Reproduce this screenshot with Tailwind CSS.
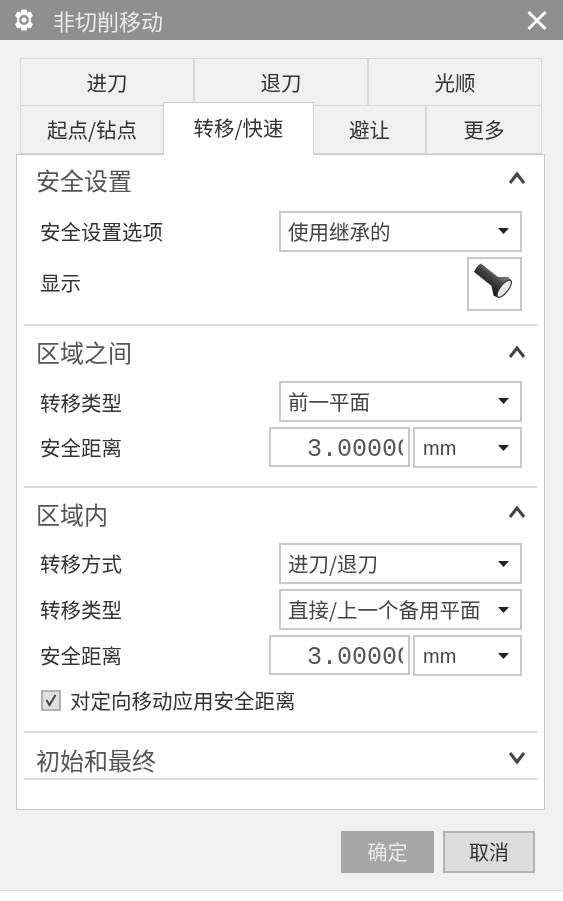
<!DOCTYPE html>
<html lang="zh-CN">

<head>
    <meta charset="UTF-8">
    <meta name="viewport" content="width=device-width, initial-scale=1.0">
    <title>非切削移动</title>
    <script src="https://cdn.jsdelivr.net/npm/@tailwindcss/browser@4"></script>
</head>

<body class="bg-white text-[#333] font-['Noto_Sans_CJK_SC','Noto_Sans',sans-serif]">
    <div class="w-[563px] h-[901px] overflow-hidden blur-[0.6px]">
        <div class="h-[891px] bg-[#f0f0f0] border-b border-[#ddd] flex flex-col">

            <!-- Title bar -->
            <div class="h-10 shrink-0 bg-[#8f8f8f] flex items-center pl-[12px] pr-[15px] text-white">
                <svg class="w-[24px] h-[24px]" viewBox="0 0 24 24">
                    <path fill="#fff" fill-rule="evenodd" d="M9.500 1.500h5l1 3 3-1 2.500 4.300-2.200 2.200v4l2.200 2.200-2.500 4.300-3-1-1 3h-5l-1-3-3 1-2.500-4.300 2.200-2.200v-4l-2.200-2.200 2.500-4.300 3 1zM12 7a5 5 0 1 0 0 10 5 5 0 0 0 0-10z" />
                    <circle cx="12" cy="12" r="2.500" fill="#fff" />
                </svg>
                <span class="ml-[17px] text-[22px] leading-none text-[#e8e8e8]">非切削移动</span>
                <svg class="ml-auto w-[22px] h-[22px]" viewBox="0 0 22 22">
                    <path d="M2.500 3l17 17M19.500 3l-17 17" stroke="#fff" stroke-width="3" fill="none" />
                </svg>
            </div>

            <!-- Tabs -->
            <div class="mt-[18px] ml-[20px] w-[522px] text-[20.500px] text-[#333]">
                <div class="flex h-12 border border-[#d8d8d8]">
                    <div class="w-[174px] flex items-center justify-center border-r-2 border-[#d8d8d8]">进刀</div>
                    <div class="w-[174px] flex items-center justify-center border-r-2 border-[#d8d8d8]">退刀</div>
                    <div class="flex-1 flex items-center justify-center">光顺</div>
                </div>
                <div class="relative flex h-12 border-x border-b border-[#d8d8d8]">
                    <div class="w-[142px] flex items-center justify-center">起点/钻点</div>
                    <div class="w-[151px] -mt-[4px] h-[53px] z-10 bg-white border-x border-t border-[#cfcfcf] flex items-center justify-center pb-[3px]">转移/快速</div>
                    <div class="w-[113px] flex items-center justify-center border-r-2 border-[#d8d8d8]">避让</div>
                    <div class="flex-1 flex items-center justify-center">更多</div>
                </div>
            </div>

            <!-- Main panel -->
            <div class="ml-[16px] w-[529px] h-[656px] bg-white border border-[#c8c8c8] px-[7px]">

                <!-- 安全设置 -->
                <div class="h-[171px] border-b-2 border-[#d8d8d8]">
                    <div class="flex items-center justify-between h-[56px] pl-[12px] pr-[11px] pb-[6px] text-[#555] text-[24px]">
                        <span>安全设置</span>
                        <svg class="w-[18px] h-[14px] -mt-[4px]" viewBox="0 0 18 14"><path d="M2 12L9 3l7 9" stroke="#444" stroke-width="3" fill="none" /></svg>
                    </div>
                    <div class="flex items-center h-[40px] pl-[16px] pr-[15px] text-[20.500px]">
                        <span>安全设置选项</span>
                        <div class="ml-auto w-[243px] h-[41px] border-2 border-[#c8c8c8] flex items-center pl-[7px] pr-[11px] text-[#444] text-[20.500px]">
                            使用继承的
                            <svg class="ml-auto w-[11px] h-[6px]" viewBox="0 0 11 6"><path d="M0 0h11L5.500 6z" fill="#222" /></svg>
                        </div>
                    </div>
                    <div class="flex items-center h-[54px] mt-[6px] pl-[16px] pr-[15px] text-[20.500px]">
                        <span class="-mt-[4px]">显示</span>
                        <div class="ml-auto w-[55px] h-[54px] border-2 border-[#c8c8c8] flex items-center justify-center">
                            <svg class="w-[42px] h-[42px]" viewBox="0 0 42 42">
                                <defs>
                                    <linearGradient id="bodyShade" x1="0" y1="0" x2="0" y2="1">
                                        <stop offset="0" stop-color="#8a8a8a" />
                                        <stop offset="0.45" stop-color="#444" />
                                        <stop offset="1" stop-color="#111" />
                                    </linearGradient>
                                </defs>
                                <g transform="translate(5 6) rotate(38)">
                                    <path d="M-2 -5.500H20L28 -12L32 -11V11L28 12L20 5.500H-2Q-4 0 -2 -5.500z" fill="url(#bodyShade)" />
                                    <ellipse cx="32" cy="0" rx="4" ry="10.500" fill="#e8e8e8" stroke="#333" stroke-width="1.200" />
                                </g>
                            </svg>
                        </div>
                    </div>
                </div>

                <!-- 区域之间 -->
                <div class="h-[162px] border-b-2 border-[#d8d8d8]">
                    <div class="flex items-center justify-between h-[55px] pl-[12px] pr-[11px] pb-[4px] text-[#555] text-[24px]">
                        <span>区域之间</span>
                        <svg class="w-[18px] h-[14px]" viewBox="0 0 18 14"><path d="M2 12L9 3l7 9" stroke="#444" stroke-width="3" fill="none" /></svg>
                    </div>
                    <div class="flex items-center h-[40px] pl-[16px] pr-[15px] text-[20.500px]">
                        <span class="mt-[2px]">转移类型</span>
                        <div class="ml-auto w-[243px] h-[41px] border-2 border-[#c8c8c8] flex items-center pl-[7px] pr-[11px] text-[#444] text-[20.500px]">
                            前一平面
                            <svg class="ml-auto w-[11px] h-[6px]" viewBox="0 0 11 6"><path d="M0 0h11L5.500 6z" fill="#222" /></svg>
                        </div>
                    </div>
                    <div class="flex items-center h-[41px] mt-[6px] pl-[16px] pr-[15px] text-[20.500px]">
                        <span>安全距离</span>
                        <div class="ml-auto flex gap-[3px]">
                            <div class="w-[141px] h-[40px] border-2 border-[#c8c8c8] flex items-center pl-[36px] text-[#555] text-[25px] font-['Liberation_Mono',monospace]">
                                <span class="w-[96px] mt-[6px] overflow-hidden whitespace-nowrap">3.00000</span>
                            </div>
                            <div class="w-[109px] h-[41px] border-2 border-[#c8c8c8] flex items-center pl-[8px] pr-[11px] text-[#444] text-[20px] font-['Liberation_Sans',sans-serif]">
                                mm
                                <svg class="ml-auto w-[11px] h-[6px]" viewBox="0 0 11 6"><path d="M0 0h11L5.500 6z" fill="#222" /></svg>
                            </div>
                        </div>
                    </div>
                </div>

                <!-- 区域内 -->
                <div class="h-[245px] border-b-2 border-[#d8d8d8]">
                    <div class="flex items-center justify-between h-[55px] pl-[12px] pr-[11px] pb-[4px] text-[#555] text-[24px]">
                        <span>区域内</span>
                        <svg class="w-[18px] h-[14px] -mt-[4px]" viewBox="0 0 18 14"><path d="M2 12L9 3l7 9" stroke="#444" stroke-width="3" fill="none" /></svg>
                    </div>
                    <div class="flex items-center h-[41px] pl-[16px] pr-[15px] text-[20.500px]">
                        <span>转移方式</span>
                        <div class="ml-auto w-[243px] h-[41px] border-2 border-[#c8c8c8] flex items-center pl-[7px] pr-[11px] text-[#444] text-[20.500px]">
                            进刀/退刀
                            <svg class="ml-auto w-[11px] h-[6px]" viewBox="0 0 11 6"><path d="M0 0h11L5.500 6z" fill="#222" /></svg>
                        </div>
                    </div>
                    <div class="flex items-center h-[41px] mt-[5px] pl-[16px] pr-[15px] text-[20.500px]">
                        <span>转移类型</span>
                        <div class="ml-auto w-[243px] h-[41px] border-2 border-[#c8c8c8] flex items-center pl-[7px] pr-[11px] text-[#444] text-[20.500px] whitespace-nowrap">
                            直接/上一个备用平面
                            <svg class="ml-auto w-[11px] h-[6px]" viewBox="0 0 11 6"><path d="M0 0h11L5.500 6z" fill="#222" /></svg>
                        </div>
                    </div>
                    <div class="flex items-center h-[41px] mt-[5px] pl-[16px] pr-[15px] text-[20.500px]">
                        <span>安全距离</span>
                        <div class="ml-auto flex gap-[3px]">
                            <div class="w-[141px] h-[40px] border-2 border-[#c8c8c8] flex items-center pl-[36px] text-[#555] text-[25px] font-['Liberation_Mono',monospace]">
                                <span class="w-[96px] mt-[6px] overflow-hidden whitespace-nowrap">3.00000</span>
                            </div>
                            <div class="w-[109px] h-[41px] border-2 border-[#c8c8c8] flex items-center pl-[8px] pr-[11px] text-[#444] text-[20px] font-['Liberation_Sans',sans-serif]">
                                mm
                                <svg class="ml-auto w-[11px] h-[6px]" viewBox="0 0 11 6"><path d="M0 0h11L5.500 6z" fill="#222" /></svg>
                            </div>
                        </div>
                    </div>
                    <div class="flex items-center h-[24px] mt-[12px] pl-[17px] text-[20.500px]">
                        <div class="w-[20px] h-[21px] border-2 border-[#b0b0b0] bg-[#e0e0e0] flex items-center justify-center">
                            <svg class="w-[14px] h-[14px]" viewBox="0 0 14 14"><path d="M2.500 7l3 5 6-10" stroke="#444" stroke-width="2" fill="none" /></svg>
                        </div>
                        <span class="ml-[9px]">对定向移动应用安全距离</span>
                    </div>
                </div>

                <!-- 初始和最终 -->
                <div class="h-[47px] border-b-2 border-[#d8d8d8] flex items-center justify-between pl-[12px] pr-[11px] text-[#555] text-[24px]">
                    <span class="mt-[8px]">初始和最终</span>
                    <svg class="w-[18px] h-[14px] mt-[4px]" viewBox="0 0 18 14"><path d="M2 2l7 9 7-9" stroke="#444" stroke-width="3" fill="none" /></svg>
                </div>
            </div>

            <!-- Footer buttons -->
            <div class="flex justify-end gap-[9px] mt-[21px] pr-[28px] text-[20px]">
                <div class="w-[93px] h-[42px] bg-[#a6a6a6] text-[#e8e8e8] flex items-center justify-center">确定</div>
                <div class="w-[92px] h-[42px] bg-[#dcdcdc] border-2 border-[#b4b4b4] flex items-center justify-center">取消</div>
            </div>
        </div>
    </div>
</body>

</html>
